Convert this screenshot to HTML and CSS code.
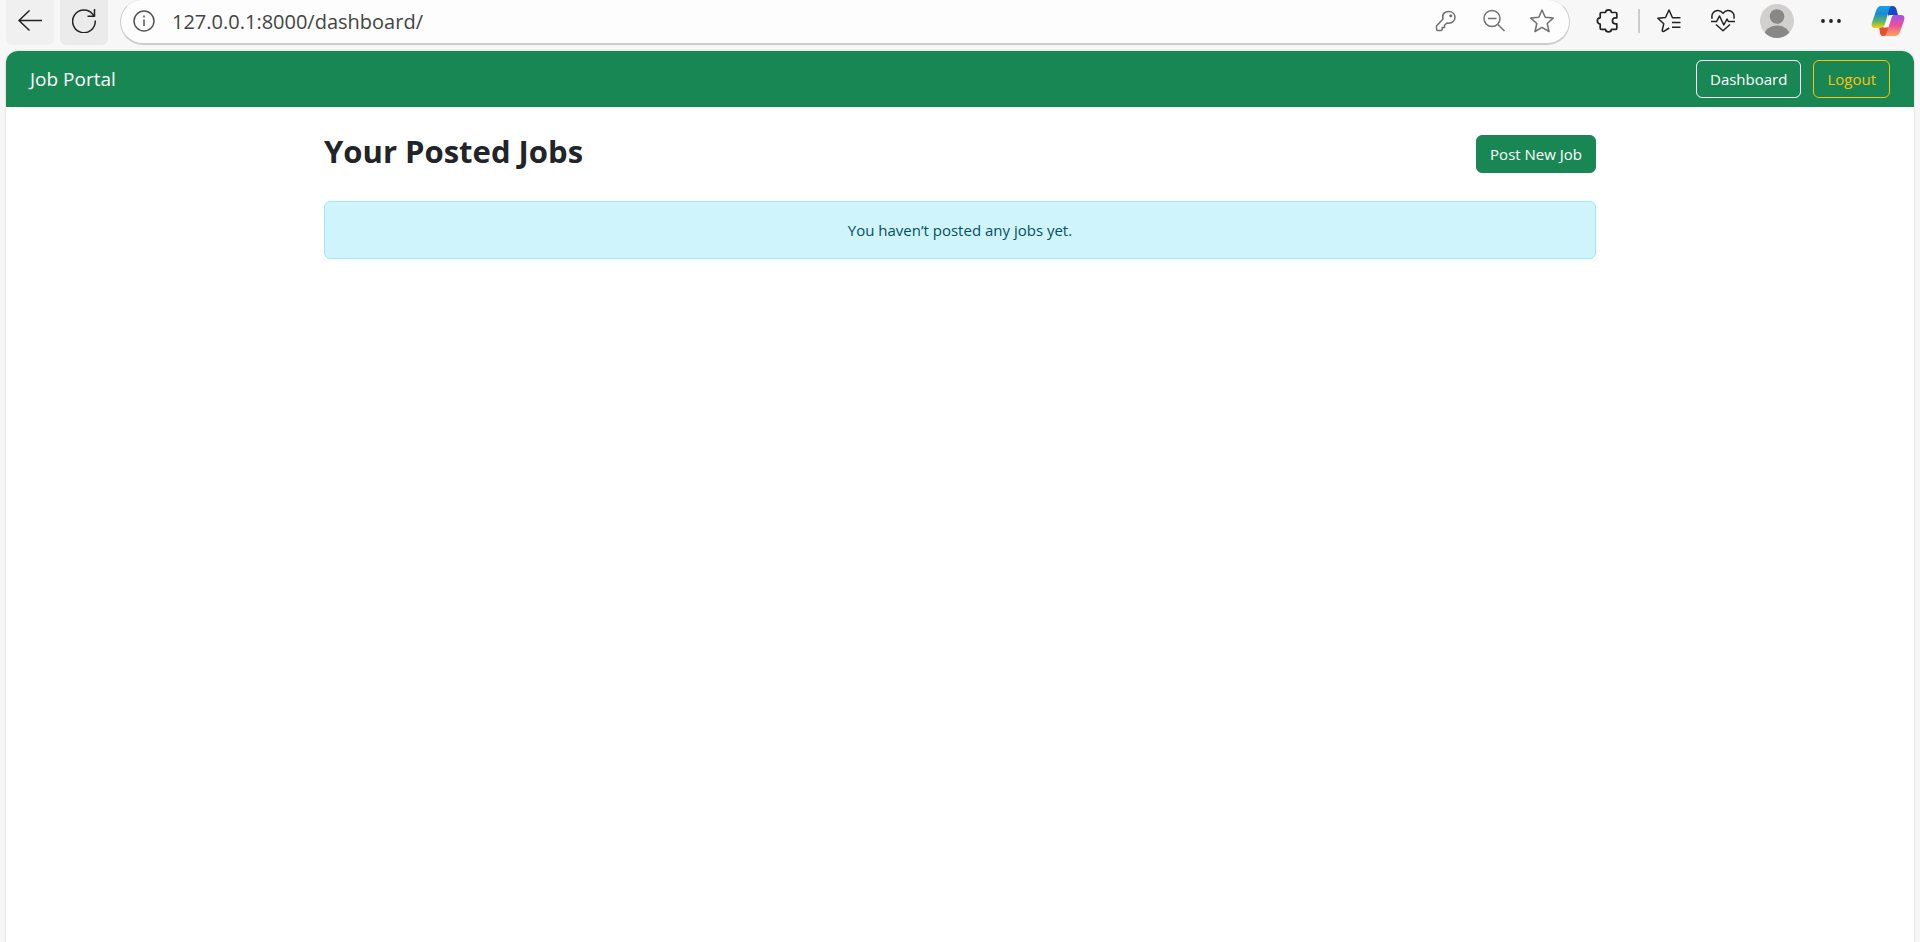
FILE: index.html
```html
<!DOCTYPE html>
<html lang="en">
<head>
<meta charset="utf-8">
<title>Job Portal</title>
<link rel="stylesheet" href="styles.css">
</head>
<body>
<header class="toolbar">
  <button class="tool-button" aria-label="Back"><svg class="icon" viewBox="0 0 24 24"><path d="M24 11.500H.5M11.500 1.500L1 11.500l10.500 10"/></svg></button>
  <button class="tool-button tool-button-active" aria-label="Refresh"><svg class="icon" viewBox="0 0 24 24"><path d="M23.200 11.500A11.300 11.300 0 1 1 20.500 5l2 2.200M22.500 0v7.300h-7"/></svg></button>
  <div class="address">
    <button class="plain" aria-label="Site information"><svg class="icon icon-info" viewBox="0 0 24 24"><circle cx="12" cy="12" r="10"/><path d="M12 10.500v6.500M12 6.500v2"/></svg></button>
    <input class="url" type="text" aria-label="Address" value="127.0.0.1:8000/dashboard/">
    <button class="plain" aria-label="Passwords"><svg class="icon icon-soft" viewBox="0 0 24 24"><path d="M9 10C7.500 5 11 2.500 14.500 2.500c4 0 6.500 2.500 6.500 6s-3 6.500-8 5.500l-2.500 2.200v2.300H8.200v2.200l-1 .8H3.800q-1.300 0-1.300-1.500V17z"/><circle cx="16.800" cy="6.800" r=".8" fill="currentColor"/></svg></button>
    <button class="plain" aria-label="Zoom out"><svg class="icon icon-soft" viewBox="0 0 24 24"><circle cx="10" cy="9.500" r="8"/><path d="M6 9.500h8.500M15.800 15.500l6.700 6.500"/></svg></button>
    <button class="plain" aria-label="Add to favorites"><svg class="icon icon-soft" viewBox="0 0 24 24"><path d="M12 1l3.200 7.300 8 .8-6 5.400 1.800 8-7-4.200-7 4.200 1.800-8-6-5.400 8-.8z"/></svg></button>
  </div>
  <div class="tools">
    <button class="plain" aria-label="Extensions"><svg class="icon icon-bold" viewBox="0 0 24 24"><path d="M4.200 4.500q0-1 1-1h4.300c.3-3.500 5.700-3.500 6 0h4.300q1 0 1 1v4.300h-1.500c-3.800 0-3.800 6 0 6h1.500v4.500q0 1-1 1h-4.300c-.3 3.300-5.700 3.300-6 0H5.200q-1 0-1-1v-4.300c-3.800-.3-3.800-6 0-6.200z"/></svg></button>
    <span class="divider"></span>
    <button class="plain" aria-label="Favorites"><svg class="icon" viewBox="0 0 24 24"><path d="M23.500 8.800h-8L12 1 8.500 8.500.800 9.200l6 5.500-1.600 6.800q.2 1.500 1.600.8l5.400-3.300M15 13.600h8.500M15 18.300h8.500"/></svg></button>
    <button class="plain" aria-label="Browser essentials"><svg class="icon" viewBox="0 0 24 24"><path d="M1.200 9.800C-.3 4 3.800 1.400 7.200 1.600c2.300.2 3.600 1.200 4.800 2.800 1.200-1.600 2.500-2.600 4.800-2.800C20.200 1.400 24.300 4 22.800 9.800M0 12.600h5.500l3-5.600 4.300 9 3.200-6 1.500 2.600h6.500M5 15.500l7 6.300 7-6.300"/></svg></button>
    <button class="plain" aria-label="Profile"><svg class="avatar" viewBox="0 0 34 34"><defs><clipPath id="face"><circle cx="17" cy="17" r="17"/></clipPath></defs><g clip-path="url(#face)"><path fill="#d2d0ce" d="M0 0h34v34H0z"/><circle cx="17" cy="12.500" r="7.300" fill="#8a8886"/><ellipse cx="17" cy="31" rx="12.500" ry="9.500" fill="#8a8886"/></g></svg></button>
    <button class="plain" aria-label="Settings and more"><svg class="icon" viewBox="0 0 24 24"><g fill="#222" stroke="none"><circle cx="4" cy="12" r="1.900"/><circle cx="12" cy="12" r="1.900"/><circle cx="20" cy="12" r="1.900"/></g></svg></button>
    <button class="plain" aria-label="Copilot"><svg class="copilot" viewBox="0 0 34 32"><defs>
      <linearGradient id="cool" x1="0" y1="0" x2="0" y2="1"><stop offset="0" stop-color="#15a3ed"/><stop offset=".35" stop-color="#168bd0"/><stop offset=".7" stop-color="#5db566"/><stop offset="1" stop-color="#ffd000"/></linearGradient>
      <linearGradient id="warm" x1="0" y1="0" x2="0" y2="1"><stop offset="0" stop-color="#a052ee"/><stop offset=".5" stop-color="#ed5196"/><stop offset="1" stop-color="#ffa45e"/></linearGradient></defs>
      <path fill="#1749c5" d="M15 1h7q2.500 0 3.300 2.700L27 10h-5q-3 0-4 3z"/>
      <path fill="#e84e30" d="M8 22h5q3 0 4-3l1 11q-1 1-4 1h-2q-2.500 0-3-3z"/>
      <path fill="url(#cool)" d="M10 1h12q-3 0-4 4l-4 14q-1.500 4-5 4H4q-4.500 0-3-5.500L5 6q1.500-5 5-5z"/>
      <path fill="url(#warm)" d="M22 10h8q4.500 0 3 5.500L29 27q-1.500 4-5 4H12q3 0 4-4l4-14q.6-3 2-3z"/>
      <path fill="#fff" d="M19 10h3.500q-1.500.5-2 3L18 20.500q-.6 2-2 2h-4q1.500-.5 2-2.500l3-8q.5-2 2-2z"/></svg></button>
  </div>
</header>
<div class="page">
  <nav class="navbar">
    <a class="brand" href="#">Job Portal</a>
    <a class="btn btn-outline-light" href="#">Dashboard</a>
    <a class="btn btn-outline-warning" href="#">Logout</a>
  </nav>
  <main class="container">
    <div class="heading-row">
      <h1 class="title">Your Posted Jobs</h1>
      <a class="btn btn-success" href="#">Post New Job</a>
    </div>
    <div class="alert" role="status">You haven’t posted any jobs yet.</div>
  </main>
</div>
</body>
</html>
```
FILE: styles.css
```css
* { box-sizing: border-box; }
body {
  margin: 0;
  min-height: 100vh;
  display: flex;
  flex-direction: column;
  background: #f7f7f7;
  color: #212529;
  font: 15px/24px "Open Sans", "Noto Sans", sans-serif;
}
button { border: 0; padding: 0; color: inherit; background: none; }
.toolbar {
  display: flex;
  align-items: flex-start;
  height: 51px;
  padding: 0 15px 0 6px;
  color: #222;
}
.tool-button {
  display: grid;
  place-items: center;
  width: 48px;
  height: 45px;
  padding-bottom: 3px;
  margin-right: 6px;
  border-radius: 0 0 6px 6px;
  background: #f0f0f0;
}
.tool-button-active { margin-right: 12px; background: #ebebeb; }
.icon {
  display: block;
  width: 24px;
  height: 24px;
  fill: none;
  stroke: currentColor;
  stroke-width: 1.5;
  stroke-linejoin: round;
}
.icon-info { stroke: #555; }
.icon-soft { stroke: #707070; color: #707070; }
.icon-bold { stroke-width: 1.7; }
.address {
  flex: 1;
  display: flex;
  align-items: center;
  gap: 24px;
  height: 46px;
  margin-top: -1px;
  padding: 0 15px 2px 11px;
  border: 1px solid #ccc;
  border-top-color: #eee;
  border-bottom-width: 2px;
  border-radius: 23px;
  background: #fdfdfd;
}
.url {
  flex: 1;
  min-width: 0;
  padding: 2px 0 0;
  margin-left: -8px;
  border: 0;
  outline: 0;
  background: none;
  color: #444;
  font: 20px/28px "Open Sans", "Noto Sans", sans-serif;
}
.tools {
  display: flex;
  align-items: center;
  height: 42px;
  gap: 30px;
  margin-left: 26px;
}
.divider { width: 2px; height: 24px; margin: 0 -13px 0 -12px; background: #ccc; }
.avatar { display: block; width: 34px; height: 34px; margin: 0 -5px; }
.copilot { display: block; width: 34px; height: 32px; margin-left: -2px; }
.page {
  flex: 1;
  margin: 0 6px;
  border-radius: 12px 12px 0 0;
  background: #fff;
  box-shadow: 0 0 2px #bbb;
}
.navbar {
  display: flex;
  align-items: center;
  gap: 12px;
  min-height: 56px;
  padding: 8px 24px;
  border-radius: 12px 12px 0 0;
  background: #198754;
}
.brand { margin-right: auto; color: #fff; font-size: 19px; line-height: 30px; text-decoration: none; }
.btn {
  padding: 6px 13px;
  border: 1px solid;
  border-radius: 6px;
  line-height: 24px;
  text-decoration: none;
}
.btn-outline-light { color: #fff; border-color: #fff; }
.btn-outline-warning { color: #ffc107; border-color: #ffc107; }
.btn-success { color: #fff; border-color: #198754; background: #198754; }
.container { max-width: 1320px; margin: 0 auto; padding: 24px; }
.heading-row {
  display: flex;
  align-items: center;
  justify-content: space-between;
  margin-bottom: 24px;
}
.title { margin: 0 0 6px; font-size: 31px; line-height: 40px; font-weight: 700; }
.alert {
  padding: 16px;
  border: 1px solid #9eeaf9;
  border-radius: 6px;
  background: #cff4fc;
  color: #055160;
  text-align: center;
}
```
